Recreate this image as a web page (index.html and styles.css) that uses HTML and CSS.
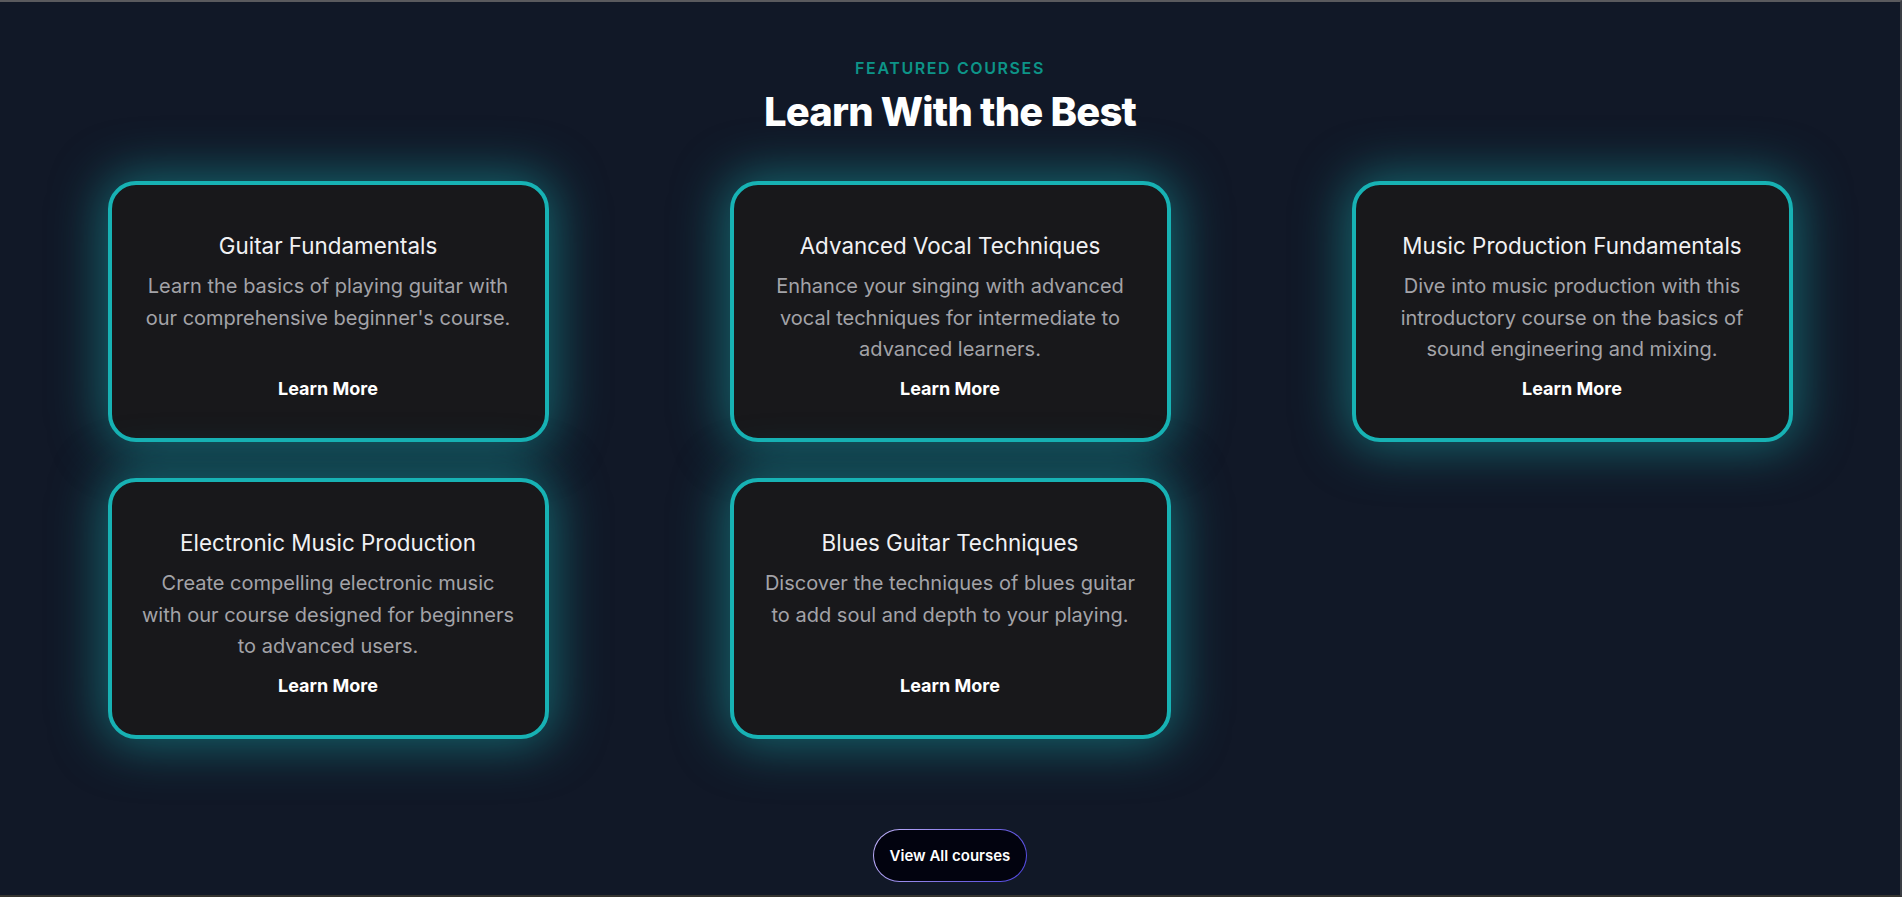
FILE: index.html
```html
<!DOCTYPE html>
<html lang="en">
<head>
<meta charset="utf-8">
<title>Featured Courses</title>
<link rel="stylesheet" href="styles.css">
</head>
<body>
<div class="page">
  <section class="courses">
    <p class="eyebrow">FEATURED COURSES</p>
    <h2 class="heading">Learn With the Best</h2>
    <div class="grid">
      <div class="card">
        <h3 class="card-title">Guitar Fundamentals</h3>
        <p class="card-text">Learn the basics of playing guitar with our comprehensive beginner's course.</p>
        <a class="card-link" href="#">Learn More</a>
      </div>
      <div class="card">
        <h3 class="card-title">Advanced Vocal Techniques</h3>
        <p class="card-text">Enhance your singing with advanced vocal techniques for intermediate to advanced learners.</p>
        <a class="card-link" href="#">Learn More</a>
      </div>
      <div class="card">
        <h3 class="card-title">Music Production Fundamentals</h3>
        <p class="card-text">Dive into music production with this introductory course on the basics of sound engineering and mixing.</p>
        <a class="card-link" href="#">Learn More</a>
      </div>
      <div class="card">
        <h3 class="card-title">Electronic Music Production</h3>
        <p class="card-text">Create compelling electronic music with our course designed for beginners to advanced users.</p>
        <a class="card-link" href="#">Learn More</a>
      </div>
      <div class="card">
        <h3 class="card-title">Blues Guitar Techniques</h3>
        <p class="card-text">Discover the techniques of blues guitar to add soul and depth to your playing.</p>
        <a class="card-link" href="#">Learn More</a>
      </div>
    </div>
    <div class="actions">
      <a class="btn" href="#">View All courses</a>
    </div>
  </section>
</div>
</body>
</html>
```

FILE: styles.css
```css
* { box-sizing: border-box; }
html, body { margin: 0; padding: 0; }
body {
  background: #111827;
  font-family: Inter, "Noto Sans", "Liberation Sans", sans-serif;
  color: #fff;
}
.page {
  height: 897px;
  border-top: 2px solid #5a5a5e;
  border-right: 2px solid #3a3d44;
  border-bottom: 2px solid #34332f;
  background: #111827;
  overflow: hidden;
}
.courses {
  padding-top: 54px;
  display: flex;
  flex-direction: column;
  align-items: center;
}
.eyebrow {
  margin: 0;
  font-size: 16px;
  line-height: 24px;
  font-weight: 600;
  letter-spacing: 0.1em;
  color: #0d9488;
}
.heading {
  margin: 8px 0 0;
  font-size: 40px;
  line-height: 48px;
  font-weight: 800;
  letter-spacing: -0.02em;
  color: #fff;
}
.grid {
  margin-top: 45px;
  display: grid;
  grid-template-columns: repeat(3, 441px);
  column-gap: 181px;
  row-gap: 36px;
  justify-content: center;
}
.card {
  display: flex;
  flex-direction: column;
  align-items: center;
  text-align: center;
  background: #18181b;
  border: 4px solid #17b2b4;
  border-radius: 28px;
  padding: 47px 28px 37.5px;
  box-shadow: 0 0 50px 6px rgba(23, 178, 180, 0.5);
}
.card-title {
  margin: 0;
  font-size: 22.4px;
  line-height: 28px;
  font-weight: 400;
  color: #f1f1f3;
}
.card-text {
  margin: 11px 0 10.5px;
  font-size: 20px;
  line-height: 31.67px;
  color: #a3a3a8;
}
.card-link {
  margin-top: auto;
  font-size: 18px;
  line-height: 24px;
  font-weight: 700;
  color: #fff;
  text-decoration: none;
}
.actions {
  margin-top: 90px;
}
.btn {
  display: inline-block;
  height: 53px;
  padding: 0 16px;
  line-height: 51px;
  border-radius: 999px;
  border: 1px solid transparent;
  background:
    linear-gradient(#02030f, #02030f) padding-box,
    linear-gradient(120deg, #c4b5fd 0%, #7c6fe0 55%, #4f46e5 100%) border-box;
  color: #fff;
  font-size: 15px;
  font-weight: 600;
  text-decoration: none;
}
```
